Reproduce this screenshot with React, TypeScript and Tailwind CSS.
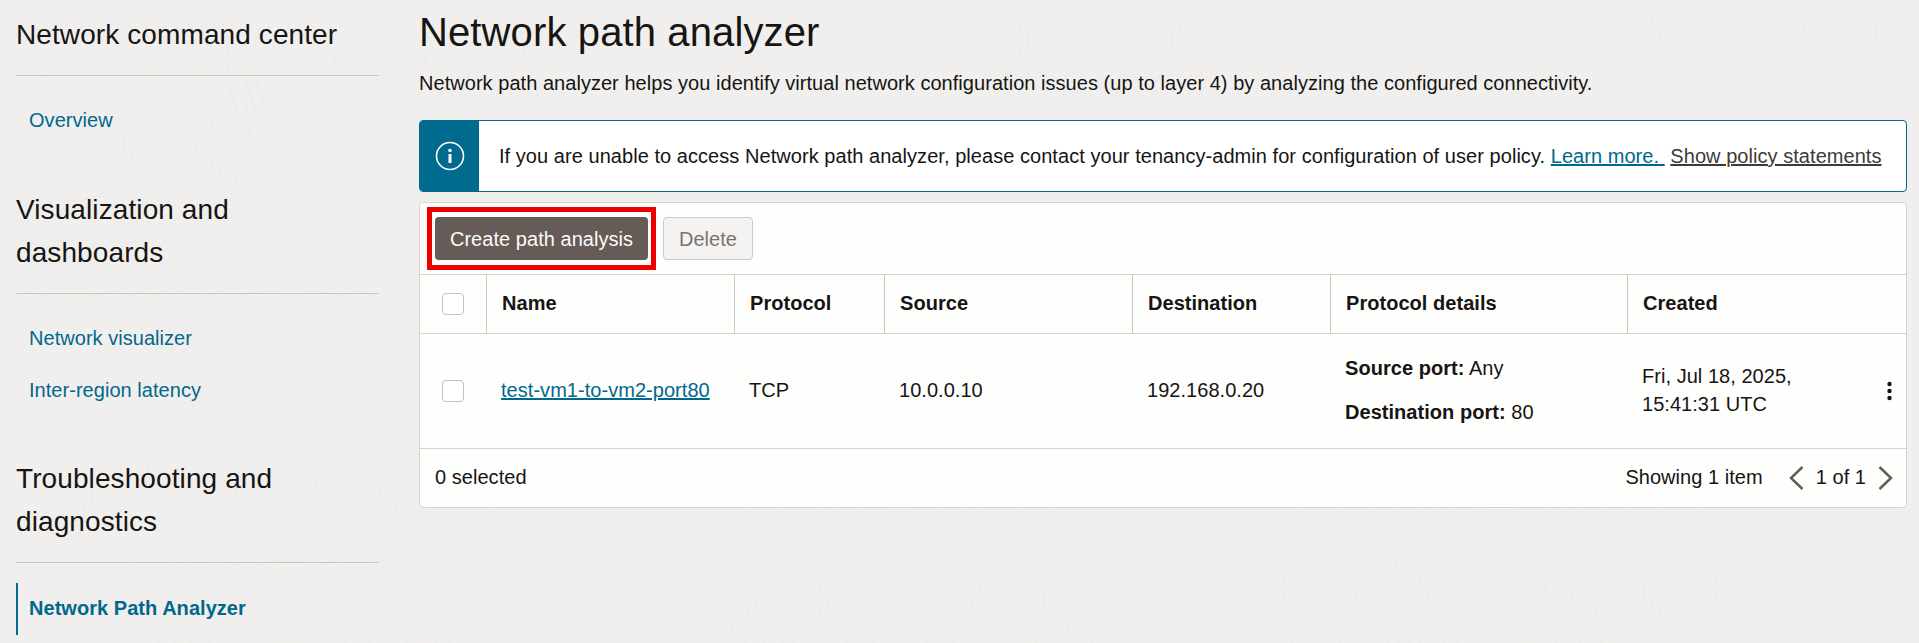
const font = { fontFamily: '"Liberation Sans", Arial, sans-serif' }

function Swirls() {
  const centers = [
    { cx: 70, cy: 145, n: 22 },
    { cx: 290, cy: 490, n: 26 },
    { cx: 380, cy: 60, n: 18 },
    { cx: 900, cy: 600, n: 22 },
    { cx: 1500, cy: 590, n: 24 },
    { cx: 1100, cy: 40, n: 14 },
    { cx: 1750, cy: 30, n: 14 },
  ]
  return (
    <svg className="absolute inset-0 h-full w-full" aria-hidden="true">
      {centers.map((c) =>
        Array.from({ length: c.n }, (_, i) => (
          <ellipse
            key={`${c.cx}-${i}`}
            cx={c.cx}
            cy={c.cy}
            rx={(i + 1) * 9}
            ry={(i + 1) * 8}
            fill="none"
            stroke="#eeecea"
            strokeWidth="1.5"
          />
        )),
      )}
    </svg>
  )
}

function SideHeading({ children }: { children: React.ReactNode }) {
  return (
    <div className="border-b border-[#c9c5c0] pb-[18px] text-[28px] leading-[43.5px] tracking-[0.1px] text-[#161513]">
      {children}
    </div>
  )
}

function SideLink({ label, active }: { label: string; active?: boolean }) {
  return (
    <div
      className={`flex h-[52px] items-center border-l-[2px] pb-[2px] pl-[11px] text-[20px] ${
        active ? 'border-[#006b8f] font-bold text-[#00688c]' : 'border-transparent text-[#00688c]'
      }`}
    >
      {label}
    </div>
  )
}

function Checkbox() {
  return <div className="h-[22px] w-[22px] rounded-[4px] border border-[#c4c0bb] bg-white" />
}

const columns = 'grid grid-cols-[66px_248px_150px_248px_198px_297px_1fr]'

function HeaderCell({ children }: { children: React.ReactNode }) {
  return (
    <div className="flex items-center border-l border-[#c9c5c0] pb-[2px] pl-[15px] font-bold">
      {children}
    </div>
  )
}

export default function App() {
  return (
    <div
      className="relative flex h-[643px] w-[1919px] overflow-hidden bg-[#f1efed] text-[20px] tracking-[0.04px] text-[#161513]"
      style={font}
    >
      <Swirls />

      <aside className="relative w-[419px] shrink-0 pl-4 pr-10 pt-[13px]">
        <SideHeading>Network command center</SideHeading>
        <div className="mt-[19px]">
          <SideLink label="Overview" />
        </div>
        <div className="mt-[41px]">
          <SideHeading>
            Visualization and
            <br />
            dashboards
          </SideHeading>
        </div>
        <div className="mt-[19px]">
          <SideLink label="Network visualizer" />
          <SideLink label="Inter-region latency" />
        </div>
        <div className="mt-[40px]">
          <SideHeading>
            Troubleshooting and
            <br />
            diagnostics
          </SideHeading>
        </div>
        <div className="mt-[20px]">
          <SideLink label="Network Path Analyzer" active />
        </div>
      </aside>

      <main className="relative flex-1 pr-[12px] pt-[12px]">
        <h1 className="text-[40px] leading-[40px] tracking-[0.12px] text-[#161513]">Network path analyzer</h1>
        <p className="mt-[20px] leading-[22px] whitespace-nowrap">
          Network path analyzer helps you identify virtual network configuration issues (up to layer 4) by
          analyzing the configured connectivity.
        </p>

        <div className="mt-[26px] flex h-[72px] overflow-hidden rounded-[4px] border border-[#006b8f] bg-white">
          <div className="flex w-[59px] shrink-0 items-center justify-center bg-[#006b8f]">
            <svg width="30" height="30" viewBox="0 0 30 30" fill="none">
              <circle cx="15" cy="15" r="13.5" stroke="white" strokeWidth="1.6" />
              <circle cx="15" cy="9.5" r="1.8" fill="white" />
              <rect x="13.5" y="13" width="3" height="9" fill="white" />
            </svg>
          </div>
          <div className="flex flex-1 items-center pl-[20px] tracking-[0.05px] whitespace-nowrap">
            <span>
              If you are unable to access Network path analyzer, please contact your tenancy-admin for
              configuration of user policy.{' '}
              <a className="text-[#00688c] underline">Learn more.&nbsp;</a>{' '}
              <a className="text-[#3f3a36] underline">Show policy statements</a>
            </span>
          </div>
        </div>

        <div className="mt-[10px] rounded-[4px] border border-[#d6d3cf] bg-[#fefefd]">
          <div className="flex h-[71px] items-center gap-[7px] pl-[7px]">
            <div className="border-[5px] border-[#ee0000] px-[3px] py-[5px]">
              <button className="flex h-[43px] w-[213px] items-center justify-center rounded-[4px] bg-[#665c57] text-[#fcfbfa]">
                Create path analysis
              </button>
            </div>
            <button className="h-[43px] w-[90px] rounded-[4px] border border-[#cdcac6] bg-[#f4f3f2] text-[#7a736e]">
              Delete
            </button>
          </div>

          <div className={`${columns} h-[60px] border-y border-y-[#d6d3cf]`}>
            <div className="flex items-center pl-[22px]">
              <Checkbox />
            </div>
            <HeaderCell>Name</HeaderCell>
            <HeaderCell>Protocol</HeaderCell>
            <HeaderCell>Source</HeaderCell>
            <HeaderCell>Destination</HeaderCell>
            <HeaderCell>Protocol details</HeaderCell>
            <HeaderCell>Created</HeaderCell>
          </div>

          <div className={`${columns} h-[115px] border-b border-b-[#d6d3cf]`}>
            <div className="flex items-center pl-[22px]">
              <Checkbox />
            </div>
            <div className="flex items-center pb-[2px] pl-[15px] whitespace-nowrap">
              <a className="text-[#00688c] underline">test-vm1-to-vm2-port80</a>
            </div>
            <div className="flex items-center pb-[2px] pl-[15px]">TCP</div>
            <div className="flex items-center pb-[2px] pl-[15px]">10.0.0.10</div>
            <div className="flex items-center pb-[2px] pl-[15px]">192.168.0.20</div>
            <div className="flex flex-col justify-center gap-[22px] pb-[2px] pl-[15px] leading-[22px] whitespace-nowrap">
              <div>
                <b>Source port:</b> Any
              </div>
              <div>
                <b>Destination port:</b> 80
              </div>
            </div>
            <div className="flex items-center justify-between pl-[15px] pr-[14px]">
              <div className="pb-[2px] leading-[28px] whitespace-nowrap">
                Fri, Jul 18, 2025,
                <br />
                15:41:31 UTC
              </div>
              <svg width="5" height="20" viewBox="0 0 5 20" fill="#161513">
                <circle cx="2.5" cy="3" r="2.2" />
                <circle cx="2.5" cy="10" r="2.2" />
                <circle cx="2.5" cy="17" r="2.2" />
              </svg>
            </div>
          </div>

          <div className="flex h-[58px] items-center justify-between pl-[15px] pr-[13px]">
            <span className="pb-[2px]">0 selected</span>
            <div className="flex items-center">
              <span className="pb-[2px]">Showing 1 item</span>
              <svg className="ml-[26px]" width="15" height="26" viewBox="0 0 15 26" fill="none">
                <path d="M13.5 2 L2 13 L13.5 24" stroke="#665c57" strokeWidth="2.5" />
              </svg>
              <span className="ml-[12px] pb-[2px]">1 of 1</span>
              <svg className="ml-[12px]" width="15" height="26" viewBox="0 0 15 26" fill="none">
                <path d="M1.5 2 L13 13 L1.5 24" stroke="#665c57" strokeWidth="2.5" />
              </svg>
            </div>
          </div>
        </div>
      </main>
    </div>
  )
}
